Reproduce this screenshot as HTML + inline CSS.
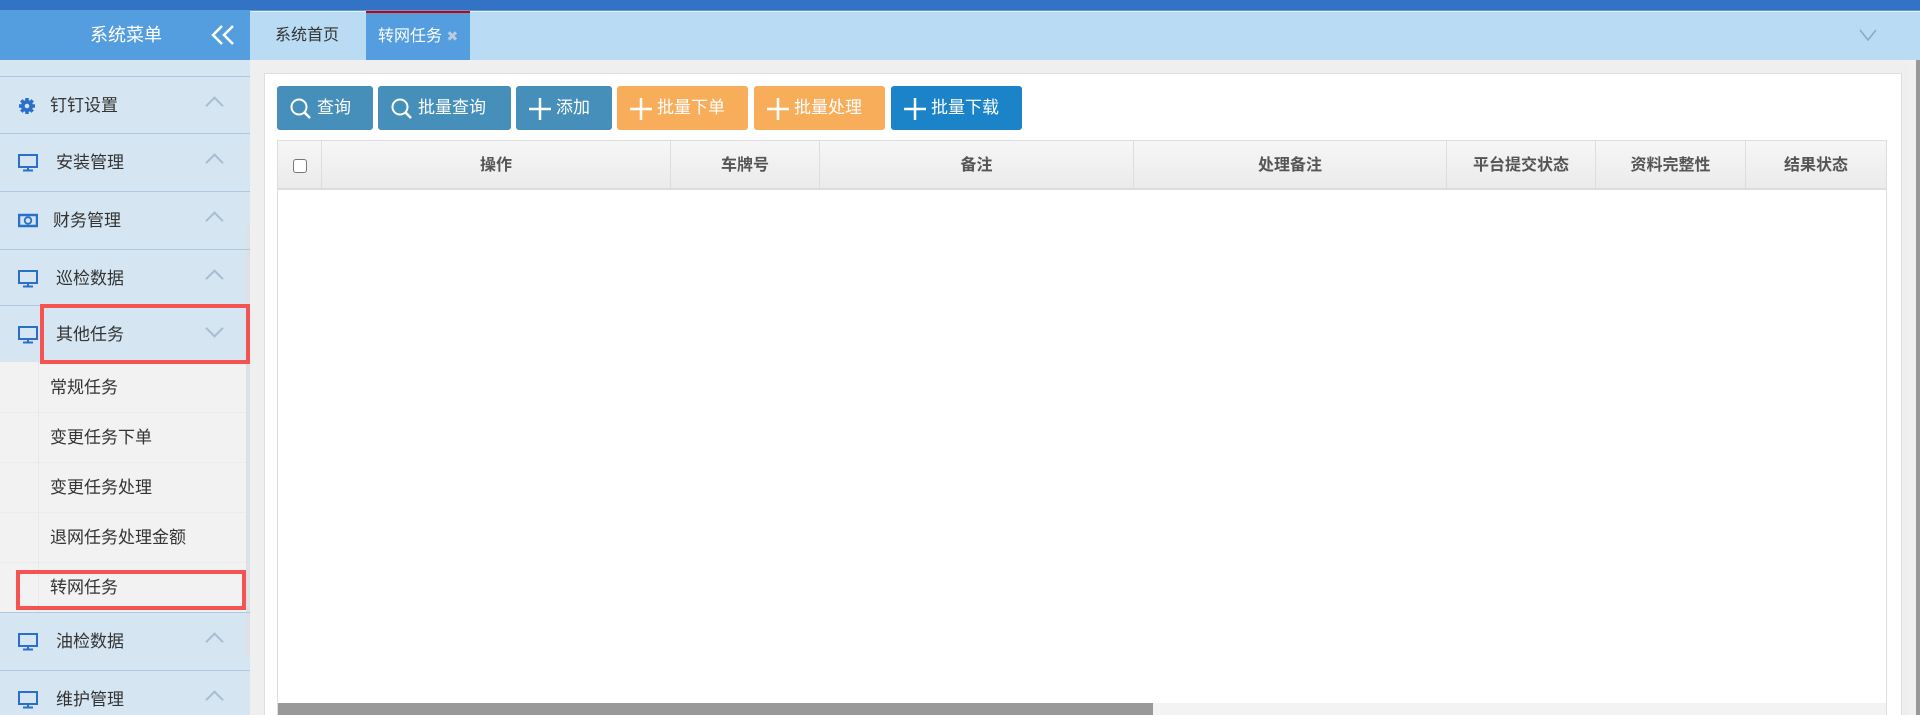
<!DOCTYPE html>
<html><head><meta charset="utf-8"><style>
*{margin:0;padding:0;box-sizing:border-box}
html,body{width:1920px;height:715px;overflow:hidden}
body{background:#efefef;font-family:"Liberation Sans","Noto Sans CJK SC",sans-serif;position:relative}
.abs{position:absolute}
#top{left:0;top:0;width:1920px;height:11px;background:#3273c6;border-bottom:1px solid #5a9be0}
#sb{left:0;top:11px;width:250px;height:704px;background:#d5e6f2}
#sbh{left:0;top:11px;width:250px;height:49px;background:#549ee0;color:#fff;font-size:18px;line-height:49px}
.row{position:absolute;left:0;width:250px;height:57px;border-top:1px solid #aec9e0;font-size:17px;color:#333;line-height:57px}
.row .t{position:absolute;left:56px}
.row .ic{position:absolute;left:18px;top:20px}
.car{position:absolute;left:208px;top:22px;width:13px;height:13px;border-left:2px solid #a9bdd0;border-top:2px solid #a9bdd0;transform:rotate(45deg)}
.car.d{transform:rotate(225deg);top:16px}
.sub{position:absolute;left:0;width:246px;height:50px;font-size:17px;color:#333;line-height:50px;padding-left:50px;border-bottom:1px solid #ececec}
#tabs{left:250px;top:12px;width:1670px;height:48px;background:#b9dbf4}
.btn{position:absolute;top:86px;height:44px;border-radius:3px;color:#fff;font-size:17px;line-height:44px}
.btn svg{position:absolute;left:12px;top:11px}
.btn span{position:absolute;left:40px}
.th{position:absolute;top:141px;height:49px;line-height:49px;text-align:center;font-weight:bold;font-size:16px;color:#555;border-right:1px solid #ddd}
</style></head><body>
<div id="top" class="abs"></div>
<div id="sb" class="abs"></div>
<div id="sbh" class="abs"><span style="position:absolute;left:90px">系统菜单</span>
<svg style="position:absolute;left:210px;top:13px" width="28" height="22" viewBox="0 0 28 22"><path d="M12 2 3 11l9 9M23 2l-9 9 9 9" fill="none" stroke="#fff" stroke-width="2.5"/></svg></div>
<div class="abs" style="left:246px;top:227px;width:4px;height:430px;background:#dde1e5"></div>

<div class="row" style="top:76px"><svg class="ic" width="18" height="18" viewBox="0 0 18 18"><circle cx="9" cy="9" r="6" fill="#2a6fc9"/><g stroke="#2a6fc9" stroke-width="3.5"><path d="M9 1v16M1 9h16M3.3 3.3l11.4 11.4M14.7 3.3 3.3 14.7"/></g><circle cx="9" cy="9" r="2.3" fill="#d5e6f2"/></svg><span class="t" style="left:50px">钉钉设置</span><i class="car"></i></div>
<div class="row" style="top:133px"><svg class="ic" width="20" height="18" viewBox="0 0 20 18"><rect x="1" y="1" width="18" height="12" fill="none" stroke="#2a6fc9" stroke-width="2"/><path d="M10 13v3M5 16.5h10" stroke="#2a6fc9" stroke-width="2"/></svg><span class="t">安装管理</span><i class="car"></i></div>
<div class="row" style="top:191px"><svg class="ic" width="20" height="18" viewBox="0 0 20 18"><rect x="1" y="3" width="18" height="11" fill="none" stroke="#2a6fc9" stroke-width="2.5"/><circle cx="10" cy="8.5" r="3.3" fill="none" stroke="#2a6fc9" stroke-width="1.8"/></svg><span class="t" style="left:53px">财务管理</span><i class="car"></i></div>
<div class="row" style="top:249px"><svg class="ic" width="20" height="18" viewBox="0 0 20 18"><rect x="1" y="1" width="18" height="12" fill="none" stroke="#2a6fc9" stroke-width="2"/><path d="M10 13v3M5 16.5h10" stroke="#2a6fc9" stroke-width="2"/></svg><span class="t">巡检数据</span><i class="car"></i></div>
<div class="row" style="top:305px"><svg class="ic" width="20" height="18" viewBox="0 0 20 18"><rect x="1" y="1" width="18" height="12" fill="none" stroke="#2a6fc9" stroke-width="2"/><path d="M10 13v3M5 16.5h10" stroke="#2a6fc9" stroke-width="2"/></svg><span class="t">其他任务</span><i class="car d"></i></div>
<div class="abs" style="left:0;top:362px;width:246px;height:250px;background:#f2f2f2"></div>
<div class="abs" style="left:38px;top:362px;width:0;height:250px;border-left:1px dotted #ddd"></div>
<div class="sub" style="top:363px">常规任务</div>
<div class="sub" style="top:413px">变更任务下单</div>
<div class="sub" style="top:463px">变更任务处理</div>
<div class="sub" style="top:513px">退网任务处理金额</div>
<div class="sub" style="top:563px;border:none">转网任务</div>
<div class="row" style="top:612px"><svg class="ic" width="20" height="18" viewBox="0 0 20 18"><rect x="1" y="1" width="18" height="12" fill="none" stroke="#2a6fc9" stroke-width="2"/><path d="M10 13v3M5 16.5h10" stroke="#2a6fc9" stroke-width="2"/></svg><span class="t">油检数据</span><i class="car"></i></div>
<div class="row" style="top:670px"><svg class="ic" width="20" height="18" viewBox="0 0 20 18"><rect x="1" y="1" width="18" height="12" fill="none" stroke="#2a6fc9" stroke-width="2"/><path d="M10 13v3M5 16.5h10" stroke="#2a6fc9" stroke-width="2"/></svg><span class="t">维护管理</span><i class="car"></i></div>
<div class="abs" style="left:40px;top:304px;width:210px;height:60px;border:4px solid #f55252"></div>
<div class="abs" style="left:16px;top:570px;width:230px;height:40px;border:4px solid #f55252"></div>

<div id="tabs" class="abs"></div>
<div class="abs" style="left:275px;top:12px;height:48px;line-height:48px;font-size:16px;color:#333">系统首页</div>
<div class="abs" style="left:366px;top:11px;width:104px;height:49px;background:#549ee0;border-top:2px solid #c00;color:#fff;font-size:16px;line-height:47px;padding-left:12px">转网任务 <span style="color:#bcd;font-size:14px">✖</span></div>
<svg class="abs" style="left:1858px;top:28px" width="20" height="14" viewBox="0 0 20 14"><path d="M2 2l8 10 8-10" fill="none" stroke="#8aa9c4" stroke-width="1.5"/></svg>

<div class="abs" style="left:264px;top:73px;width:1638px;height:650px;background:#fff;border:1px solid #ddd"></div>
<div class="abs" style="left:1910px;top:60px;width:10px;height:655px;background:#f0f0f0"></div>
<div class="abs" style="left:1916px;top:60px;width:4px;height:655px;background:#999"></div>

<div class="btn" style="left:277px;width:96px;background:#458fba"><svg width="24" height="24" viewBox="0 0 24 24"><circle cx="10" cy="10" r="7.5" fill="none" stroke="#fff" stroke-width="2"/><path d="M15.5 15.5 21 21" stroke="#fff" stroke-width="2.5"/></svg><span>查询</span></div>
<div class="btn" style="left:378px;width:133px;background:#458fba"><svg width="24" height="24" viewBox="0 0 24 24"><circle cx="10" cy="10" r="7.5" fill="none" stroke="#fff" stroke-width="2"/><path d="M15.5 15.5 21 21" stroke="#fff" stroke-width="2.5"/></svg><span>批量查询</span></div>
<div class="btn" style="left:516px;width:96px;background:#458fba"><svg width="24" height="24" viewBox="0 0 24 24"><path d="M12 1v22M1 12h22" stroke="#fff" stroke-width="2.5"/></svg><span>添加</span></div>
<div class="btn" style="left:617px;width:131px;background:#f8ad5b"><svg width="24" height="24" viewBox="0 0 24 24"><path d="M12 1v22M1 12h22" stroke="#fff" stroke-width="2.5"/></svg><span>批量下单</span></div>
<div class="btn" style="left:754px;width:131px;background:#f8ad5b"><svg width="24" height="24" viewBox="0 0 24 24"><path d="M12 1v22M1 12h22" stroke="#fff" stroke-width="2.5"/></svg><span>批量处理</span></div>
<div class="btn" style="left:891px;width:131px;background:#1b84c8"><svg width="24" height="24" viewBox="0 0 24 24"><path d="M12 1v22M1 12h22" stroke="#fff" stroke-width="2.5"/></svg><span>批量下载</span></div>

<div class="abs" style="left:277px;top:140px;width:1610px;height:575px;border:1px solid #ddd;border-bottom:none"></div>
<div class="abs" style="left:278px;top:141px;width:1608px;height:49px;background:linear-gradient(#f6f6f6,#ebebeb);border-bottom:2px solid #ddd"></div>
<div class="th" style="left:278px;width:44px"><span style="display:inline-block;width:14px;height:14px;border:1px solid #777;border-radius:3px;background:#fff;vertical-align:middle"></span></div>
<div class="th" style="left:322px;width:349px">操作</div>
<div class="th" style="left:671px;width:149px">车牌号</div>
<div class="th" style="left:820px;width:314px">备注</div>
<div class="th" style="left:1134px;width:313px">处理备注</div>
<div class="th" style="left:1447px;width:149px">平台提交状态</div>
<div class="th" style="left:1596px;width:150px">资料完整性</div>
<div class="th" style="left:1746px;width:140px;border:none">结果状态</div>
<div class="abs" style="left:278px;top:703px;width:1608px;height:12px;background:#f3f3f3"></div>
<div class="abs" style="left:278px;top:703px;width:875px;height:12px;background:#999"></div>
</body></html>
